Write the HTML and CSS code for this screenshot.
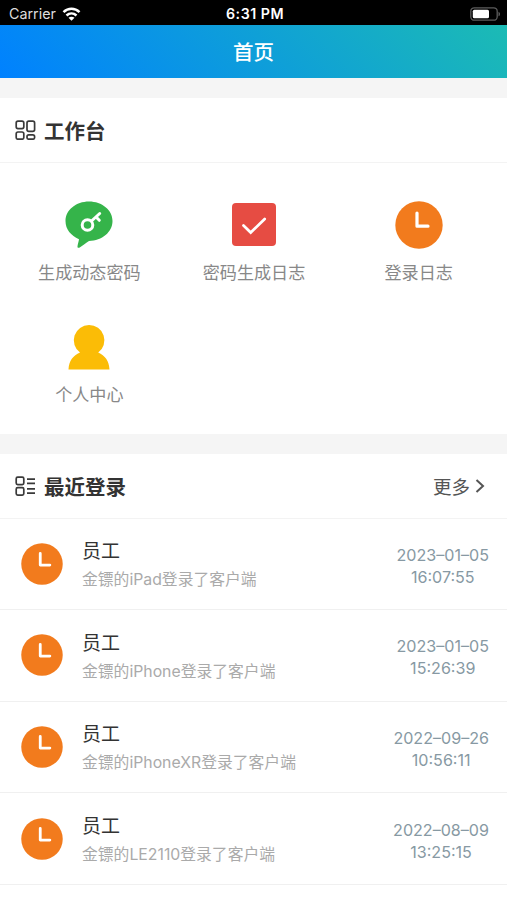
FILE: index.html
```html
<!DOCTYPE html>
<html lang="zh-CN">
  <head>
    <meta charset="UTF-8" />
    <title>首页</title>
    <link rel="stylesheet" href="styles.css">
  </head>
  <body>
    <svg width="0" height="0" class="sprite">
      <symbol id="clock" viewBox="0 0 48 48">
        <circle cx="24" cy="24" r="23.700" fill="#f27b1d" />
        <path d="M22 12v13.200h11" fill="none" stroke="#fff" stroke-width="3.200" stroke-linecap="round" stroke-linejoin="round" />
      </symbol>
    </svg>

    <div class="status-bar">
      <div class="carrier">
        <span>Carrier</span>
        <svg width="19" height="14" viewBox="0 0 18 14" fill="none" stroke="#fff" stroke-width="2.500">
          <path d="M1 5.100C5.600.6 12.400.6 17 5.100" />
          <path d="M4 8.500c2.900-2.700 7.100-2.700 10 0" />
          <path d="M9 13.800L6 10.800c1.700-1.500 4.300-1.500 6 0z" fill="#fff" stroke="none" />
        </svg>
      </div>
      <div class="clock-time">6:31 PM</div>
      <div class="battery">
        <svg width="31" height="14" viewBox="0 0 31 14">
          <rect x=".8" y=".8" width="26.400" height="12.400" rx="3.500" fill="none" stroke="#5c5c5c" stroke-width="1.300" />
          <rect x="2.800" y="2.800" width="16.200" height="8.400" rx="1.500" fill="#fff" />
          <path d="M28.500 4.700c2 .8 2 3.800 0 4.600z" fill="#5c5c5c" />
        </svg>
      </div>
    </div>
    <header class="navbar">首页</header>

    <section class="card workbench">
      <div class="card-header">
        <svg width="21" height="20" viewBox="0 0 21 20" fill="none" stroke="#3a3a3a" stroke-width="1.700">
          <rect x="1.200" y="1.200" width="7.600" height="7.400" rx="1.800" />
          <rect x="12" y="1.200" width="7.600" height="10.200" rx="1.800" />
          <rect x="1.200" y="12" width="7.600" height="7.200" rx="1.800" />
          <rect x="12" y="14.900" width="7.600" height="4.300" rx="1.800" />
        </svg>
        <h2>工作台</h2>
      </div>
      <div class="grid">
        <div class="grid-item">
          <svg width="48" height="48" viewBox="0 0 48 48">
            <path d="M24 .5C37 .5 47.500 9 47.500 20S37 39.800 24 40c-3.800 2.400-6.300 4.700-9.300 6.500-1.500.8-2.400.2-2.200-1.300.3-2.300 1.200-4.500 1.500-7C6 34.500.5 28.500.5 20 .5 9 11 .5 24 .5z" fill="#35b44a" />
            <g fill="none" stroke="#fff" stroke-width="3" stroke-linecap="round">
              <circle cx="22.500" cy="24" r="5.300" />
              <path d="M26.500 20l8.200-7.500M31 16l3.300 3.300" />
            </g>
          </svg>
          <span>生成动态密码</span>
        </div>
        <div class="grid-item">
          <svg width="48" height="48" viewBox="0 0 48 48">
            <rect x="2" y="2" width="44" height="43" rx="4" fill="#e64c43" />
            <path d="M13.500 24.500l7.200 7L34.700 18" fill="none" stroke="#fff" stroke-width="2.700" stroke-linecap="round" />
          </svg>
          <span>密码生成日志</span>
        </div>
        <div class="grid-item">
          <svg width="48" height="48"><use href="#clock" /></svg>
          <span>登录日志</span>
        </div>
        <div class="grid-item">
          <svg width="48" height="48" viewBox="0 0 48 48">
            <path d="M24 2a15.300 15.300 0 0 1 9.200 27.600C40 32.500 44 38 44.500 46.500h-41C4 38 8 32.500 15 29.600A15.300 15.300 0 0 1 24 2z" fill="#fbbc06" />
          </svg>
          <span>个人中心</span>
        </div>
      </div>
    </section>

    <section class="card">
      <div class="card-header">
        <svg width="21" height="20" viewBox="0 0 21 20" fill="none" stroke="#3a3a3a" stroke-width="1.700">
          <rect x="1.200" y="1.200" width="7.600" height="7.400" rx="1.500" />
          <rect x="1.200" y="11.700" width="7.600" height="7.400" rx="1.500" />
          <path d="M12 3.200h8M12 7.400h8M12 12.900h8M12 17.100h8" />
        </svg>
        <h2>最近登录</h2>
        <a class="more">
          更多
          <svg width="10" height="16" viewBox="0 0 10 16" fill="none" stroke="#555" stroke-width="2">
            <path d="M1.500 2l6.500 6-6.500 6" />
          </svg>
        </a>
      </div>
      <div class="log">
        <svg width="42" height="42"><use href="#clock" /></svg>
        <div class="log-info">
          <h3>员工</h3>
          <p>金镖的iPad登录了客户端</p>
        </div>
        <div class="log-time">2023–01–05<br>16:07:55</div>
      </div>
      <div class="log">
        <svg width="42" height="42"><use href="#clock" /></svg>
        <div class="log-info">
          <h3>员工</h3>
          <p>金镖的iPhone登录了客户端</p>
        </div>
        <div class="log-time">2023–01–05<br>15:26:39</div>
      </div>
      <div class="log">
        <svg width="42" height="42"><use href="#clock" /></svg>
        <div class="log-info">
          <h3>员工</h3>
          <p>金镖的iPhoneXR登录了客户端</p>
        </div>
        <div class="log-time">2022–09–26<br>10:56:11</div>
      </div>
      <div class="log">
        <svg width="42" height="42"><use href="#clock" /></svg>
        <div class="log-info">
          <h3>员工</h3>
          <p>金镖的LE2110登录了客户端</p>
        </div>
        <div class="log-time">2022–08–09<br>13:25:15</div>
      </div>
    </section>
  </body>
</html>
```

FILE: styles.css
```css
* {
  box-sizing: border-box;
}
body {
  margin: 0;
  height: 900px;
  overflow: hidden;
  background: #ffffff;
  font-family: Inter, "Noto Sans CJK SC", sans-serif;
  color: #333;
}
h2,
h3,
p {
  margin: 0;
}
.sprite {
  display: block;
}
.status-bar {
  display: grid;
  grid-template-columns: 1fr auto 1fr;
  align-items: center;
  height: 25px;
  padding: 2px 6px 0 9px;
  background: #000;
  color: #fff;
  font-size: 14px;
}
.carrier {
  display: flex;
  align-items: center;
  gap: 6px;
  color: #ddd;
  font-size: 14.3px;
}
.clock-time {
  font-weight: 600;
  font-size: 14.2px;
  letter-spacing: 0.5px;
}
.battery {
  display: flex;
  justify-content: flex-end;
}
.navbar {
  height: 53px;
  padding-top: 1px;
  line-height: 53px;
  text-align: center;
  color: #fff;
  font-size: 20.5px;
  font-weight: 500;
  background: linear-gradient(45deg, #0081ff, #1cbbb4);
}
.card {
  border-top: 20px solid #f5f5f5;
}
.workbench {
  height: 355.5px;
}
.card-header {
  display: flex;
  align-items: center;
  height: 65px;
  padding: 0 22px 0 15px;
  border-bottom: 1px solid #f3f3f3;
}
.card-header h2 {
  margin-left: 8px;
  font-size: 20.5px;
  font-weight: 700;
}
.more {
  display: flex;
  align-items: center;
  gap: 5px;
  margin-left: auto;
  font-size: 18.5px;
  color: #555;
}
.grid {
  display: grid;
  grid-template-columns: repeat(3, 1fr);
  grid-auto-rows: 122px;
  padding: 38px 6px 0 7px;
}
.grid-item {
  display: flex;
  flex-direction: column;
  align-items: center;
}
.grid-item span {
  margin-top: 11px;
  line-height: 26px;
  font-size: 17.1px;
  color: #888;
}
.log {
  display: flex;
  align-items: center;
  height: 91.6px;
  padding: 0 18px 0 21px;
  border-bottom: 1px solid #f0f0f0;
}
.log-info {
  flex: 1;
  margin-left: 19px;
  padding-top: 5px;
}
.log-info h3 {
  line-height: 28px;
  font-size: 19px;
  font-weight: 400;
}
.log-info p {
  line-height: 28px;
  font-size: 15.8px;
  color: #aaa;
}
.log-time {
  padding-top: 4px;
  text-align: center;
  line-height: 22px;
  font-size: 16.1px;
  color: #8799a3;
}
```
